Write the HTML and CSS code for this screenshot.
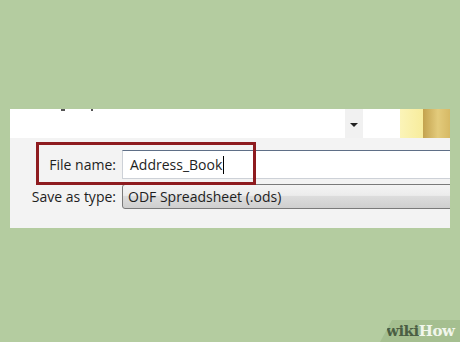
FILE: index.html
```html
<!DOCTYPE html>
<html lang="en">
<head>
  <meta charset="UTF-8" />
  <title>Save As - File name</title>
  <link rel="stylesheet" href="styles.css">
</head>
<body>

  <div class="panel">
    <div class="toprow">
      <span class="cut cut1"></span>
      <span class="cut cut2"></span>
      <div class="path"></div>
      <div class="arrow"><span class="tri"></span></div>
      <div class="blank"></div>
      <div class="thumb-light"></div>
      <div class="thumb-gold"></div>
    </div>

    <div class="form">
      <div class="row">
        <label class="lbl">File name:</label>
        <div class="field">Address_Book<span class="caret"></span></div>
      </div>
      <div class="row">
        <label class="lbl">Save as type:</label>
        <div class="combo">ODF Spreadsheet (.ods)</div>
      </div>
      <div class="check-row">
        <span class="box"></span>
        <span class="check-text">Automatic file name extension</span>
      </div>
    </div>

    <div class="highlight"></div>
  </div>

  <div class="brand"><span class="wiki">wiki</span><span class="how">How</span></div>

</body>
</html>
```

FILE: styles.css
```css
body {
  margin: 0;
  width: 460px;
  height: 342px;
  overflow: hidden;
  background: #b4cca0;
  font-family: "Open Sans", "Noto Sans", sans-serif;
  color: #1e1e1e;
  position: relative;
}
.panel {
  position: relative;
  margin: 109px 0 0 10px;
  width: 440px;
  height: 119px;
  background: #f3f3f3;
  overflow: hidden;
}
.toprow {
  position: relative;
  display: flex;
  height: 29px;
  background: #fff;
}
.cut {
  position: absolute;
  top: 0;
  height: 2px;
  background: #555;
}
.cut1 { left: 51px; width: 4px; }
.cut2 { left: 81px; width: 2px; }
.path {
  flex: 1;
}
.arrow {
  width: 18px;
  background: #f1f1f1;
  display: flex;
  align-items: center;
  justify-content: center;
}
.tri {
  width: 0;
  height: 0;
  border-left: 4px solid transparent;
  border-right: 4px solid transparent;
  border-top: 4px solid #222;
  margin-top: 2px;
}
.blank {
  width: 37px;
}
.thumb-light {
  width: 23px;
  background: linear-gradient(90deg, #fbf4b8, #f7ec9c);
}
.thumb-gold {
  width: 27px;
  background: linear-gradient(90deg, #c3a24e, #e3cb7c 55%, #d6b965);
}
.form {
  padding: 12px 0 0 0;
  display: flex;
  flex-direction: column;
  gap: 5px;
}
.row {
  display: flex;
  align-items: center;
}
.lbl {
  width: 106px;
  text-align: right;
  font-size: 14px;
  padding-right: 6px;
}
.field {
  flex: 1;
  height: 27px;
  margin-right: -10px;
  background: #fff;
  border: 1px solid #cdd1d7;
  border-top-color: #5f6f87;
  font-size: 14px;
  line-height: 27px;
  padding-left: 7px;
}
.caret {
  display: inline-block;
  width: 1px;
  height: 18px;
  background: #000;
  vertical-align: -4px;
  margin-left: 1px;
}
.combo {
  flex: 1;
  height: 23px;
  margin-right: -10px;
  border: 1px solid #7a7a7a;
  border-radius: 3px;
  background: linear-gradient(#f4f4f4, #ececec 45%, #dcdcdc 50%, #cfcfcf);
  font-size: 14px;
  line-height: 23px;
  padding-left: 5px;
}
.check-row {
  display: flex;
  align-items: flex-start;
  gap: 6px;
  padding: 17px 0 0 143px;
  font-size: 13px;
  line-height: 16px;
}
.box {
  width: 13px;
  height: 13px;
  border: 1px solid #8f8f8f;
  background: #f6f6f6;
}
.highlight {
  position: absolute;
  left: 26px;
  top: 33px;
  width: 214px;
  height: 37px;
  border: 3px solid #8e1b1f;
}
.brand {
  position: absolute;
  right: 0;
  bottom: 0;
  width: 80px;
  height: 22px;
  background: #a5bf90;
  clip-path: polygon(12px 0, 100% 0, 100% 100%, 0 100%);
  font-family: "DejaVu Serif", "Liberation Serif", serif;
  font-weight: bold;
  font-size: 15px;
  line-height: 22px;
  padding-left: 6px;
  box-sizing: border-box;
  letter-spacing: -0.5px;
}
.wiki {
  color: #4b5e43;
}
.how {
  color: #f1f6ec;
}
```
